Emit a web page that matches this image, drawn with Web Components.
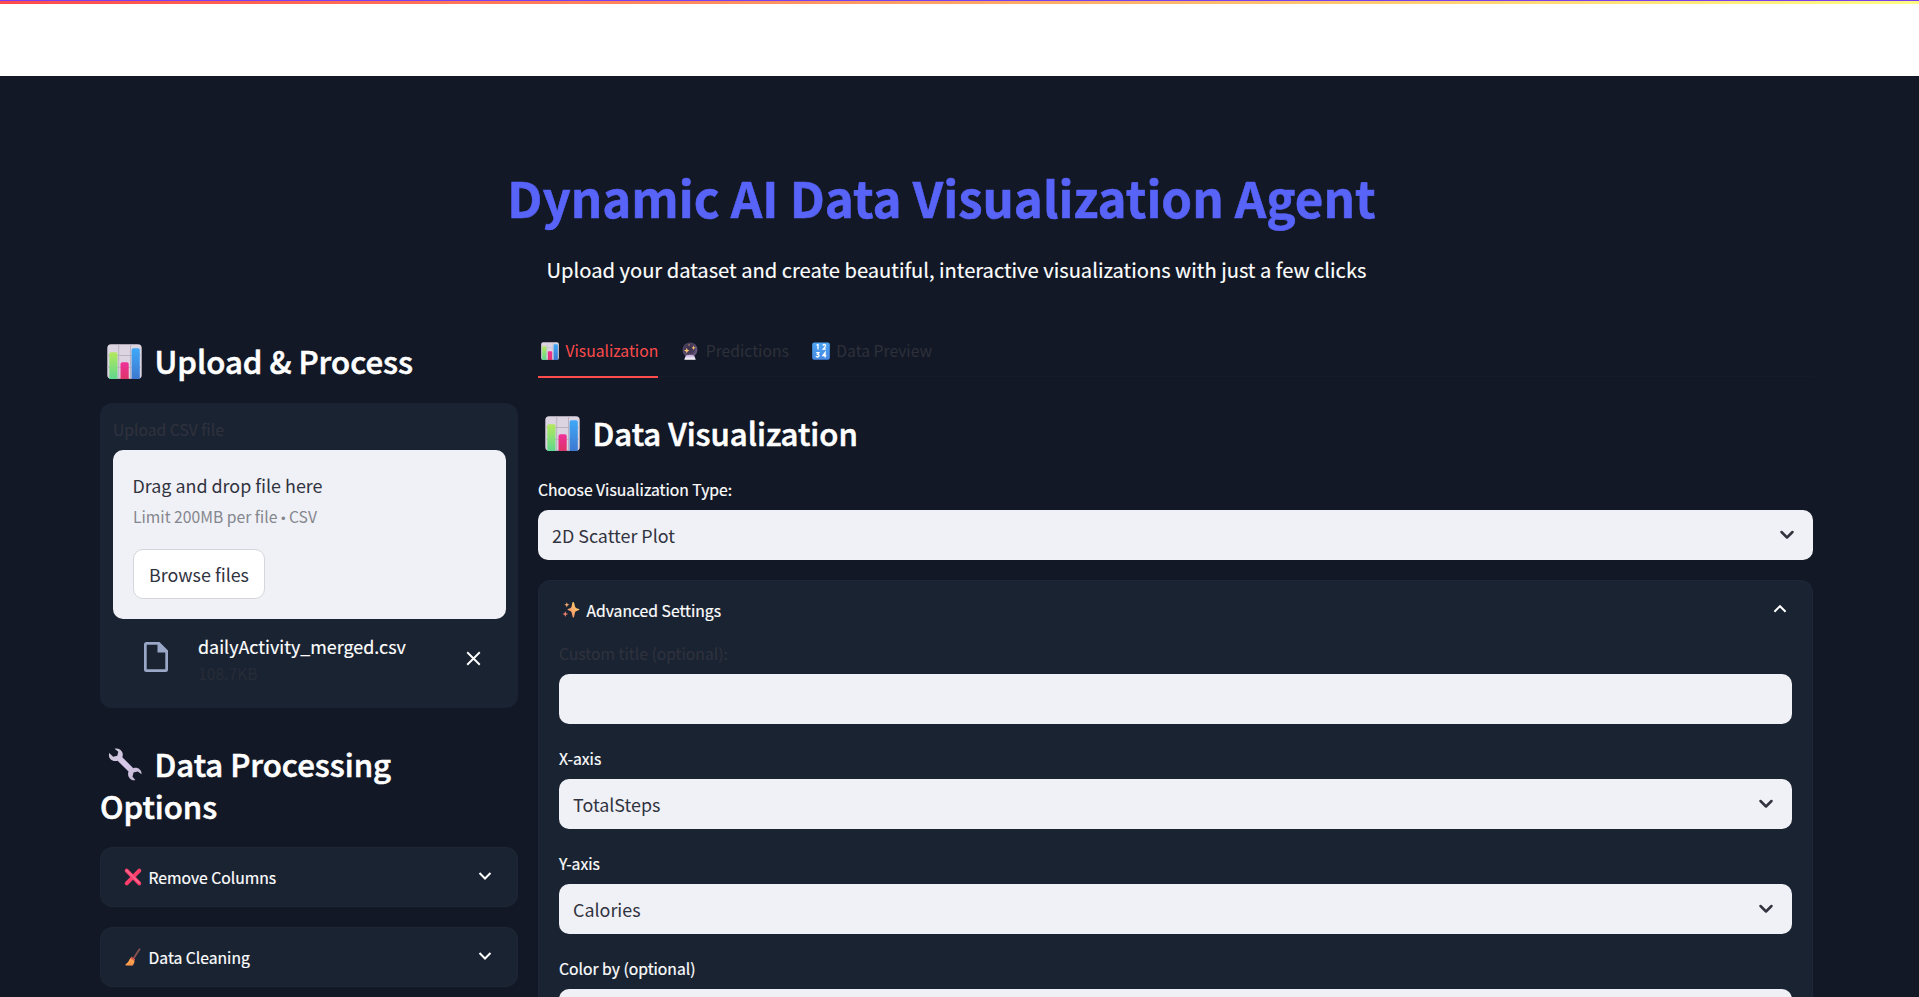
<!DOCTYPE html>
<html lang="en">
<head>
<meta charset="utf-8">
<title>Dynamic AI Data Visualization Agent</title>
<style>
html,body{margin:0;height:100%;overflow:hidden}
body{background:#121826;color:#fff;font-family:"Noto Sans CJK SC","Noto Sans",sans-serif;font-size:17.900px}
</style>
</head>
<body>
<viz-app></viz-app>
<script>
const define = (name, html) => customElements.define(name, class extends HTMLElement {
  constructor() {
    super();
    const t = document.createElement('template');
    t.innerHTML = html;
    this.attachShadow({mode: 'open'}).append(t.content.cloneNode(true));
  }
});

const ICONS = {
  chart: `<svg viewBox="0 0 35 35"><defs>
    <linearGradient id="g" x2="0" y2="1"><stop stop-color="#b5e85c"/><stop offset="1" stop-color="#5fd88e"/></linearGradient>
    <linearGradient id="r" x2="0" y2="1"><stop stop-color="#f0319b"/><stop offset="1" stop-color="#dc3568"/></linearGradient>
    <linearGradient id="b" x2="0" y2="1"><stop stop-color="#3fa9f8"/><stop offset="1" stop-color="#3d78d0"/></linearGradient></defs>
    <rect x=".3" y=".3" width="34.4" height="34.4" rx="3.8" fill="#dcd5e1"/>
    <path d="M11.7.3v34.4M23.5.3v34.4M.3 11.5h34.4M.3 23.3h34.4" stroke="#b9b2c2" stroke-width="1"/>
    <path d="M2.3 35V10q0-1.800 1.800-1.800h4.600q1.800 0 1.800 1.800v25z" fill="url(#g)"/>
    <path d="M13.500 35V20q0-1.800 1.800-1.800h4.600q1.800 0 1.800 1.800v15z" fill="url(#r)"/>
    <path d="M24.600 35V6q0-1.800 1.800-1.800h4.600q1.800 0 1.800 1.800v29z" fill="url(#b)"/></svg>`,
  wrench: `<svg viewBox="0 0 35 35"><defs><linearGradient id="w" x2="1" y2="1"><stop stop-color="#c9c3cf"/><stop offset=".5" stop-color="#d8c9ec"/><stop offset="1" stop-color="#bdb4c8"/></linearGradient></defs>
    <path fill="url(#w)" d="M7.6 1.8c3.200-.9 6.400.6 7.700 3.500.7 1.600.6 3.400 0 4.900l11 11c2.400-.8 5-.2 6.700 1.600 1.200 1.300 1.700 2.900 1.500 4.400l-3.700-2.800-4.300 1.100-1 4.200 2.900 3.400c-1.800.5-4-.1-5.500-1.700-1.800-1.800-2.300-4.500-1.400-6.800l-10.900-10.900c-2.500.9-5.300.3-7.200-1.700C1.900 10.500 1.500 8.200 2.300 6.100l3.800 3.700 4.200-1 1-4.100z"/></svg>`,
  cross: `<svg viewBox="0 0 18 18"><path d="M2.700 2.700 15.300 15.300M15.300 2.700 2.700 15.300" stroke="#fb3f6c" stroke-width="4" stroke-linecap="round"/><path d="M2.600 2.400 15 14.800" stroke="#ff6a91" stroke-width="1.400" stroke-linecap="round"/></svg>`,
  broom: `<svg viewBox="0 0 18 18"><path d="M15.500 1.300 9.800 10" stroke="#87514f" stroke-width="1.900" stroke-linecap="round"/><path d="M7.300 8.600 11.200 11.200 9.900 13.400 6 11z" fill="#d55a4c"/><path d="M6.200 10.300 10.600 13.100C10.400 15 9.600 16.600 8.700 17.400H2.200c-.8 0-.9-.9-.3-1.300C3.800 15 4.900 12.700 6.200 10.300z" fill="#ffa04f"/><path d="M5 17.300 7 14.500M7.700 17.300 8.700 15.500" stroke="#e9733f" stroke-width=".7"/></svg>`,
  ball: `<svg viewBox="0 0 18 18"><defs><radialGradient id="o" cx=".45" cy=".4"><stop stop-color="#37304c"/><stop offset=".75" stop-color="#4a3f5e"/><stop offset="1" stop-color="#66577a"/></radialGradient><linearGradient id="s" x2="0" y2="1"><stop stop-color="#bfa5d6"/><stop offset="1" stop-color="#fff"/></linearGradient></defs>
    <circle cx="9" cy="7.800" r="7.400" fill="url(#o)"/><path d="M4.800 13.400Q9 12.200 13.200 13.400L14.600 17.200q0 .5-.5.5H3.900q-.5 0-.5-.5z" fill="url(#s)"/>
    <path d="M5.800 5.800l.7 2 2 .8-2 .8-.7 2-.8-2-2-.8 2-.8zM12.600 3.600l.6 1.600 1.500.6-1.500.6-.6 1.600-.6-1.600-1.500-.6 1.500-.6zM8 1.900l.4.8.8.3-.8.3-.4.8-.3-.8-.8-.3.8-.3z" fill="#ffc26c"/></svg>`,
  digits: `<svg viewBox="0 0 18 18"><defs><linearGradient id="n" x2="0" y2="1"><stop stop-color="#4da5f2"/><stop offset="1" stop-color="#4688e6"/></linearGradient></defs><rect x=".2" y=".5" width="17.600" height="17.200" rx="2" fill="url(#n)"/>
    <path d="M4.500 3.300 6 2.500V7.600M11 3.500q.3-1 1.400-1 1.200 0 1.200 1.200 0 .9-2.400 3.500h2.700M4.200 10.600H6.900L5.600 12.300q1.500.1 1.500 1.300T5.500 15q-1.100 0-1.500-.9M13.100 15.500V10.500L10.900 13.700H14.300" fill="none" stroke="#fff" stroke-width="1.300"/></svg>`,
  sparkles: `<svg viewBox="0 0 18 18"><defs><linearGradient id="k" x1="1" x2="0" y2="1"><stop stop-color="#ffdc6d"/><stop offset="1" stop-color="#f5836b"/></linearGradient></defs>
    <path d="M11.200 1Q11.900 1 12.200 2.200L13 5.600Q13.300 6.800 14.500 7.200L17 8.100Q17.800 8.600 17 9.100L14.500 10Q13.300 10.400 13 11.600L12 15.900Q11.300 17.200 10.700 15.900L9.600 11.600Q9.300 10.400 8.200 10L5.900 9.100Q5.100 8.600 5.900 8.100L8.200 7.200Q9.300 6.800 9.600 5.600L10.200 2.200Q10.500 1 11.200 1z" fill="url(#k)"/>
    <path d="M4.800 1.200 5.500 3.100 7.400 3.800 5.500 4.500 4.800 6.400 4.100 4.500 2.300 3.800 4.100 3.100z" fill="#f7a970"/><path d="M3.300 10.200 4.100 12.300 6.200 13 4.100 13.800 3.300 15.900 2.500 13.800.4 13 2.500 12.300z" fill="#f38272"/></svg>`,
  down: `<svg viewBox="0 0 16 16"><path d="M2.500 5 8 10.500 13.500 5" fill="none" stroke="currentColor" style="stroke-width:var(--stroke,2);stroke-linecap:var(--cap,butt);stroke-linejoin:var(--join,miter)"/></svg>`,
  up: `<svg viewBox="0 0 16 16"><path d="M2.400 10.800 8 5.200 13.600 10.800" fill="none" stroke="currentColor" stroke-width="2"/></svg>`,
  close: `<svg viewBox="0 0 16 16"><path d="M1.300 1.300 14.700 14.700M14.700 1.300 1.300 14.700" stroke="currentColor" stroke-width="2"/></svg>`,
  file: `<svg viewBox="0 0 24 30"><path d="M2.500 0H15.500L24 8.500V27.500Q24 30 21.500 30H2.500Q0 30 0 27.500V2.500Q0 0 2.500 0zM2.700 2.700V27.300H21.300V10.500H13.500V2.700z" fill="#9aa7c7" fill-rule="evenodd"/></svg>`
};
customElements.define('viz-icon', class extends HTMLElement {
  constructor() { super(); this.attachShadow({mode: 'open'}); }
  connectedCallback() {
    this.shadowRoot.innerHTML = `<style>:host{display:inline-block;flex:none;width:18px;height:18px}svg{display:block;width:100%;height:100%;overflow:visible}</style>` + ICONS[this.getAttribute('name')];
  }
});

define('viz-header', `<style>:host{display:block;height:76px;background:#fff}
.a{height:1px;background:#7b3ff2}.b{height:3px;background:linear-gradient(90deg,#ff4b4b,#fffd80)}</style>
<div class="a"></div><div class="b"></div>`);

define('viz-hero', `<style>:host{display:block;text-align:center}
h1{margin:0 30px 28px 0;font-size:49.200px;font-weight:700;line-height:60px;color:#5863f8;-webkit-text-stroke:.6px currentColor}
p{margin:0;font-size:20.150px;line-height:30px;-webkit-text-stroke:.15px currentColor}</style>
<h1><slot name="title"></slot></h1><p><slot></slot></p>`);

define('viz-heading', `<style>:host{display:block}
h2{margin:0;padding-right:20px;font-size:31.150px;font-weight:500;line-height:42px;-webkit-text-stroke:.6px currentColor}
::slotted(viz-icon){width:35px;height:35px;margin:0 13px 0 6.500px;vertical-align:-5px}</style>
<h2><slot name="icon"></slot><slot></slot></h2>`);

define('viz-tab', `<style>:host{display:flex;align-items:center;box-sizing:border-box;height:43px;padding:0 0 11px 3px;font-size:15.700px;line-height:30px;color:#2e3039;margin-bottom:-2px}
:host([active]){color:#ff4b4b;border-bottom:2px solid #ff4b4b;padding-bottom:9px}
::slotted(viz-icon){margin-right:6.500px;margin-top:-1px}</style>
<slot name="icon"></slot><slot></slot>`);
define('viz-tabs', `<style>:host{display:flex;gap:20px;height:41px;border-bottom:1px solid #161b28}</style><slot></slot>`);

define('viz-select', `<style>:host{display:block}
.l{font-size:15.700px;line-height:30px;min-height:30px;padding-bottom:5px;-webkit-text-stroke:.2px currentColor}
.s{display:flex;align-items:center;justify-content:space-between;box-sizing:border-box;height:50px;padding:0 18px 0 14px;border-radius:10px;background:#f0f1f6;color:#31333f;line-height:50px}
.s span{margin-top:-1px}
.s viz-icon{width:16px;height:16px;--stroke:2.5;--cap:round;--join:round;margin-top:-1px}
:host([plain]) .s viz-icon{display:none}
:host([plain]) .l{color:#2f323d}</style>
<div class="l"><slot name="label"></slot></div><div class="s"><span><slot></slot></span><viz-icon name="down"></viz-icon></div>`);

define('viz-expander', `<style>:host{display:block;box-sizing:border-box;border:1px solid #1d2735;border-radius:12px;background:#1a2332}
.h{display:flex;align-items:center;height:58px;padding:0 24.500px 0 23px;font-size:15.700px;line-height:30px;-webkit-text-stroke:.2px currentColor}
.h span{flex:1;padding-left:6.500px;margin-top:1px}
.h>viz-icon{width:16px;height:16px;margin-top:-2px}
.b{padding:0 20px}
.up{display:none}
:host([open]) .up{display:block}:host([open]) .down{display:none}</style>
<div class="h"><slot name="icon"></slot><span><slot name="label"></slot></span><viz-icon class="down" name="down"></viz-icon><viz-icon class="up" name="up"></viz-icon></div>
<div class="b"><slot></slot></div>`);

define('viz-uploader', `<style>:host{display:block;box-sizing:border-box;height:305px;padding:12px 12px 0 13px;border-radius:12px;background:#1a2332}
.l{font-size:15.700px;line-height:30px;color:#2f323d;padding-bottom:5px;-webkit-text-stroke:.2px currentColor}
.z{box-sizing:border-box;height:169px;padding:20px;border-radius:10px;background:#f0f1f6;color:#31333f}
.d{line-height:30px;margin-left:-.5px}
.m{font-size:15.700px;line-height:30px;color:#84868e;margin-top:2px}
.m i{font:normal 13px "Liberation Sans",sans-serif}
.btn{display:block;box-sizing:border-box;width:132px;height:50px;margin-top:17px;padding:0;border:1px solid #d5d6db;border-radius:10px;background:#fff;color:inherit;font:inherit;line-height:47px;text-align:center}
.f{display:flex;padding:13px 25px 0 31px}
.f>.i{width:24px;height:30px;margin-top:10px}
.n{flex:1;padding-left:30px;line-height:30px;margin-top:-1px;-webkit-text-stroke:.15px currentColor}
.n small{display:block;font-size:15.700px;line-height:26px;color:#262c37}
.x{width:15px;height:15px;margin-top:19px}</style>
<div class="l">Upload CSV file</div>
<div class="z"><div class="d">Drag and drop file here</div><div class="m">Limit 200MB per file <i>•</i> CSV</div><button class="btn">Browse files</button></div>
<div class="f"><viz-icon class="i" name="file"></viz-icon><div class="n">dailyActivity_merged.csv<small>108.7KB</small></div><viz-icon class="x" name="close"></viz-icon></div>`);

define('viz-app', `<style>:host{display:block;height:997px;overflow:hidden}
main{padding:91px 106px 0 100px}
.cols{display:grid;grid-template-columns:418px 1fr;gap:20px;margin-top:50px}
viz-uploader{margin-top:21px}
.left{padding-top:5px}
.opts{margin-top:35px;margin-bottom:20px}
.left viz-expander{margin-bottom:20px}
.viz{margin-top:35px}
.type{margin:21px 0 20px}
.panel viz-select{margin-bottom:20px}
</style>
<viz-header></viz-header>
<main>
<viz-hero><span slot="title">Dynamic AI Data Visualization Agent</span>Upload your dataset and create beautiful, interactive visualizations with just a few clicks</viz-hero>
<div class="cols">
<div class="left">
<viz-heading><viz-icon slot="icon" name="chart"></viz-icon>Upload &amp; Process</viz-heading>
<viz-uploader></viz-uploader>
<viz-heading class="opts"><viz-icon slot="icon" name="wrench"></viz-icon>Data Processing Options</viz-heading>
<viz-expander><viz-icon slot="icon" name="cross"></viz-icon><span slot="label">Remove Columns</span></viz-expander>
<viz-expander><viz-icon slot="icon" name="broom"></viz-icon><span slot="label">Data Cleaning</span></viz-expander>
</div>
<div class="right">
<viz-tabs><viz-tab active><viz-icon slot="icon" name="chart"></viz-icon>Visualization</viz-tab><viz-tab><viz-icon slot="icon" name="ball"></viz-icon>Predictions</viz-tab><viz-tab><viz-icon slot="icon" name="digits"></viz-icon>Data Preview</viz-tab></viz-tabs>
<viz-heading class="viz"><viz-icon slot="icon" name="chart"></viz-icon>Data Visualization</viz-heading>
<viz-select class="type"><span slot="label">Choose Visualization Type:</span>2D Scatter Plot</viz-select>
<viz-expander class="panel" open><viz-icon slot="icon" name="sparkles"></viz-icon><span slot="label">Advanced Settings</span>
<viz-select plain><span slot="label">Custom title (optional):</span></viz-select>
<viz-select><span slot="label">X-axis</span>TotalSteps</viz-select>
<viz-select><span slot="label">Y-axis</span>Calories</viz-select>
<viz-select><span slot="label">Color by (optional)</span></viz-select>
</viz-expander>
</div>
</div>
</main>`);
</script>
</body>
</html>
